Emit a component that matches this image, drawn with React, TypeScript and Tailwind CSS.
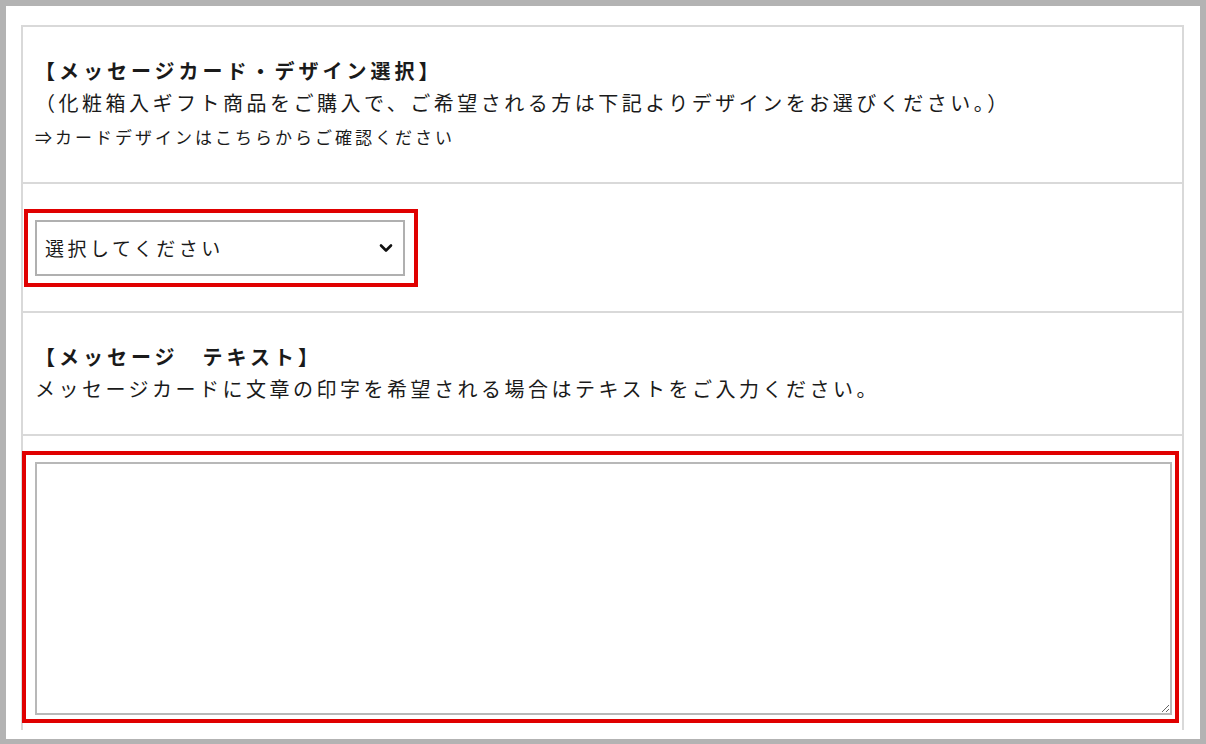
import React from "react";

const jp = "font-['Noto_Sans_CJK_JP',sans-serif]";

function Chevron() {
  return (
    <svg width="14" height="10" viewBox="0 0 14 10" className="pointer-events-none absolute right-[12px] top-[23px]">
      <path d="M2 2.5 L7 7.5 L12 2.5" fill="none" stroke="#111" strokeWidth="2.6" strokeLinecap="round" strokeLinejoin="round" />
    </svg>
  );
}

export default function App() {
  return (
    <div className={`h-[744px] bg-[#b3b3b3] px-[6px] pt-[6px] pb-[5px] ${jp}`}>
      <div className="h-[733px] bg-white pl-[15px] pt-[19px]">
        <div className="w-[1163px] border-x-2 border-t-2 border-[#d9d9d9] text-[#1a1a1a]">
          {/* design select heading */}
          <div className="h-[157px] border-b-2 border-[#d9d9d9] pl-[12px] pt-[28px]">
            <p className="text-[20px] font-bold leading-[32px] tracking-[4px]">【メッセージカード・デザイン選択】</p>
            <p className="text-[20px] leading-[32px] tracking-[3.5px]">
              （化粧箱入ギフト商品をご購入で、ご希望される方は下記よりデザインをお選びください。）
            </p>
            <p className="text-[17px] leading-[36px] tracking-[3px]">⇒カードデザインはこちらからご確認ください</p>
          </div>

          {/* select */}
          <div className="h-[129px] border-b-2 border-[#d9d9d9] pl-px pt-[25px]">
            <div className="h-[78px] w-[394px] border-4 border-[#e00000] p-[7px]">
              <div className="relative h-[56px] w-[370px]">
                <select
                  defaultValue=""
                  className="h-full w-full appearance-none border-2 border-[#b0b0b0] bg-white pl-[8px] text-[19px] tracking-[3.5px] text-[#1a1a1a] outline-none"
                >
                  <option value="">選択してください</option>
                </select>
                <Chevron />
              </div>
            </div>
          </div>

          {/* text heading */}
          <div className="h-[123px] border-b-2 border-[#d9d9d9] pl-[12px] pt-[28px]">
            <p className="text-[20px] font-bold leading-[32px] tracking-[4px]">【メッセージ　テキスト】</p>
            <p className="text-[20px] leading-[32px] tracking-[3.5px]">
              メッセージカードに文章の印字を希望される場合はテキストをご入力ください。
            </p>
          </div>

          {/* textarea */}
          <div className="h-[294px] pt-[15px]">
            <div className="-ml-px h-[272px] w-[1157px] border-4 border-[#e00000] pt-[7px] pr-[3px] pb-[4px] pl-[9px]">
              <textarea className="block h-full w-full resize border-2 border-[#b8b8b8] bg-white outline-none" />
            </div>
          </div>
        </div>
      </div>
    </div>
  );
}
